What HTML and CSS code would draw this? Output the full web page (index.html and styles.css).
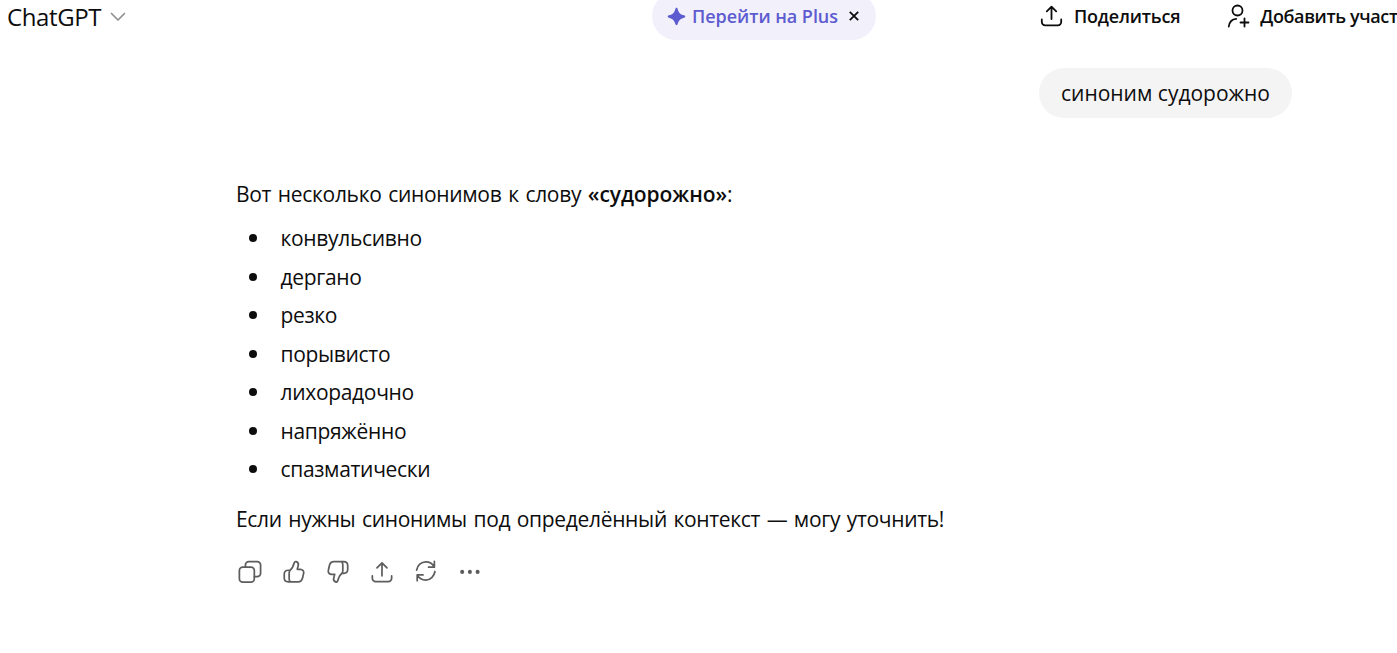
FILE: index.html
```html
<!DOCTYPE html>
<html lang="ru">
<head>
<meta charset="utf-8">
<title>ChatGPT</title>
<link rel="stylesheet" href="styles.css">
</head>
<body>
<header class="topbar">
  <div class="model"><span class="model-name">ChatGPT</span>
    <svg class="chevron" width="16" height="10" viewBox="0 0 16 10"><path d="M1.5 1.5 8 8l6.500-6.500"/></svg>
  </div>
  <div class="upgrade">
    <svg class="spark" width="19" height="19" viewBox="0 0 20 20"><path d="M10 .8c.7 0 1 .6 1.200 1.200 1.300 4.300 2.500 5.500 6.800 6.800.7.200 1.200.5 1.200 1.200s-.5 1-1.200 1.200c-4.300 1.300-5.500 2.500-6.800 6.800-.2.700-.5 1.200-1.200 1.200s-1-.5-1.200-1.200C7.500 13.700 6.300 12.500 2 11.200 1.300 11 .8 10.700.8 10s.5-1 1.200-1.200C6.300 7.500 7.500 6.300 8.800 2 9 1.400 9.300.8 10 .8z"/></svg>
    <span class="upgrade-text">Перейти на Plus</span>
    <svg class="close" width="10" height="10" viewBox="0 0 10 10"><path d="m.8.8 8.400 8.400M9.200.8.8 9.200"/></svg>
  </div>
  <div class="actions">
    <div class="action">
      <svg class="icon" width="24" height="24" viewBox="0 0 24 24"><path d="M12.500 15V2.800M7.800 7.300l4.700-4.700 4.700 4.700M2.800 15.500v2.500a3.300 3.300 0 0 0 3.300 3.300h12.800a3.300 3.300 0 0 0 3.300-3.300v-2.500"/></svg>
      <span class="share-text">Поделиться</span>
    </div>
    <div class="action">
      <svg class="icon" width="24" height="24" viewBox="0 0 24 24"><circle cx="11.500" cy="6.500" r="5"/><path d="M2.800 22.500c.6-4.300 3.200-7.300 7.400-7.600M18.500 14.500v8M14.500 18.500h8"/></svg>
      <span class="add-text">Добавить участ</span>
    </div>
  </div>
</header>
<main class="thread">
  <div class="user-row"><div class="bubble">синоним судорожно</div></div>
  <article class="answer">
    <p class="intro">Вот несколько синонимов к слову <strong>«судорожно»</strong>:</p>
    <ul class="words">
      <li>конвульсивно</li>
      <li>дергано</li>
      <li>резко</li>
      <li>порывисто</li>
      <li>лихорадочно</li>
      <li>напряжённо</li>
      <li>спазматически</li>
    </ul>
    <p class="outro">Если нужны синонимы под определённый контекст — могу уточнить!</p>
  </article>
  <div class="tools">
    <svg class="tool" viewBox="0 0 28 28"><rect x="3.500" y="9.500" width="15.500" height="15.500" rx="3.500"/><path d="M9.800 9.500V7.300a3.500 3.500 0 0 1 3.500-3.500H22a3.500 3.500 0 0 1 3.500 3.500v8.400a3.500 3.500 0 0 1-3.500 3.500h-3"/></svg>
    <svg class="tool" viewBox="0 0 28 28"><path d="M10.500 12.700c2-1.600 3.300-4.300 4.300-7.800.3-1.100 1.200-1.500 2.100-1.100 1.800.7 2.500 2.200 2 4.100l-1 3.800h3.200c2.400 0 4 1.900 3.400 4.200l-1.200 5.200c-.6 2.200-2.200 3.700-4.500 3.700H8.600c-2.500 0-4.200-1.700-4.200-4.200v-3.700c0-2.500 1.700-4.200 4.200-4.200h1.900M10.500 12.700c-.7.800-1 1.600-1 2.800v6c0 1.400.4 2.400 1.200 3.300"/></svg>
    <svg class="tool" viewBox="0 0 28 28"><path d="M18.500 15.900c-2 1.600-3.300 4.300-4.300 7.800-.3 1.100-1.200 1.500-2.100 1.100-1.800-.7-2.500-2.200-2-4.100l1-3.800H7.900c-2.400 0-4-1.900-3.400-4.200l1.200-5.200c.6-2.200 2.200-3.700 4.500-3.700h10.200c2.500 0 4.200 1.700 4.200 4.200v3.700c0 2.500-1.700 4.200-4.200 4.200h-1.900M18.500 15.900c.7-.8 1-1.600 1-2.800v-6c0-1.400-.4-2.400-1.200-3.300"/></svg>
    <svg class="tool" viewBox="0 0 28 28"><path d="M14.500 18.500V5.300M9.300 10.300l5.200-5.200 5.200 5.200M4.500 18.500v2.600A3.500 3.500 0 0 0 8 24.600h13a3.500 3.500 0 0 0 3.500-3.500v-2.600"/></svg>
    <svg class="tool" viewBox="0 0 28 28"><path d="M4.800 12.500C5.600 7.600 9.500 4 14.300 4c3.800 0 7 2 8.700 5.100M23.200 3.500v6h-6M23.800 14c-.8 4.900-4.700 8.900-9.500 8.900-3.800 0-7-2-8.700-5.100M5.400 23.500v-6h6"/></svg>
    <svg class="tool dots" viewBox="0 0 28 28"><circle cx="6.400" cy="14.400" r="2.100"/><circle cx="14.400" cy="14.400" r="2.100"/><circle cx="22.400" cy="14.400" r="2.100"/></svg>
  </div>
</main>
</body>
</html>
```
FILE: styles.css
```css
body {
  margin: 0;
  width: 1397px;
  height: 653px;
  overflow: hidden;
  background: #fff;
  color: #0d0d0d;
  font-family: "Open Sans", "Noto Sans", sans-serif;
  font-size: 21px;
}
svg { flex: none; fill: none; stroke: currentColor; stroke-linecap: round; stroke-linejoin: round; }
.topbar { display: grid; grid-template-columns: 652px 224px 1fr; height: 40px; overflow: hidden; white-space: nowrap; }
.model { display: flex; align-items: center; height: 32px; padding-left: 7px; font-size: 24px; letter-spacing: -0.4px; gap: 9px; }
.chevron { stroke: #8f8f8f; stroke-width: 1.7; margin-top: 2px; }
.upgrade {
  box-sizing: border-box;
  display: flex;
  align-items: center;
  height: 48px;
  margin-top: -8px;
  padding: 0 14px 0 15px;
  background: #f1f0fb;
  color: #5d5bd0;
  border-radius: 24px;
  font-size: 18px;
  font-weight: 600;
  letter-spacing: -0.04px;
}
.spark { fill: currentColor; stroke: none; margin-right: 6px; }
.close { stroke: #0d0d0d; stroke-width: 1.8; margin-left: 11px; stroke-linecap: butt; }
.actions { display: flex; height: 32px; padding-left: 163px; gap: 47px; overflow: hidden; }
.action { display: flex; align-items: center; font-size: 18px; font-weight: 600; gap: 11px; }
.share-text { letter-spacing: -0.2px; }
.add-text { letter-spacing: -0.38px; margin-left: -1px; }
.icon { stroke-width: 1.8; }
.action + .action .icon { margin-left: -1px; }
.user-row { display: flex; justify-content: flex-end; padding: 28px 105px 0 0; }
.bubble {
  box-sizing: border-box;
  width: 253px;
  height: 50px;
  border-radius: 25px;
  padding-left: 22px;
  background: #f4f4f4;
  line-height: 50px;
  white-space: nowrap;
}
.answer { padding: 57px 0 0 236px; white-space: nowrap; letter-spacing: -0.32px; word-spacing: 1.4px; }
.intro, .outro { margin: 0; line-height: 38.5px; }
.intro { word-spacing: 1.6px; }
strong { font-weight: 600; letter-spacing: -0.08px; }
.words { margin: 5.5px 0 11.5px; padding: 0; list-style: none; }
.words li { display: flex; align-items: center; height: 38.5px; }
.words li::before { content: ""; width: 8px; height: 8px; margin: 0 23.5px 0 13px; border-radius: 50%; background: #0d0d0d; }
.tools { display: flex; gap: 17px; padding: 19px 0 0 236px; color: #5d5d5d; }
.tool { width: 27px; height: 27px; stroke-width: 1.8; }
.dots { fill: currentColor; stroke: none; }
```
